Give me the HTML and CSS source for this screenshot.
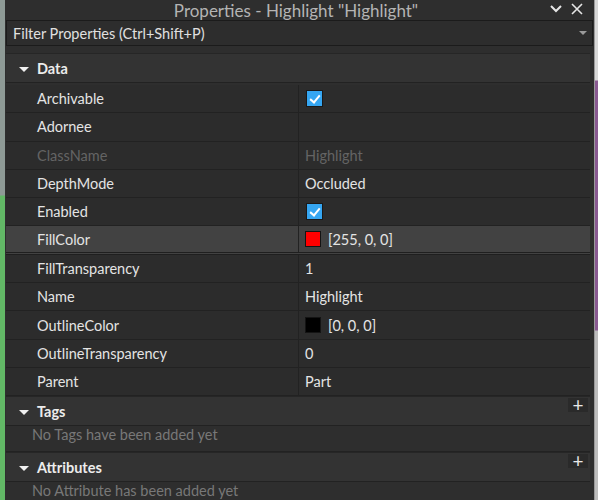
FILE: index.html
```html
<!DOCTYPE html>
<html lang="en">
<head>
    <meta charset="UTF-8">
    <title>Properties - Highlight "Highlight"</title>
    <link rel="stylesheet" href="styles.css">
</head>
<body>
    <div class="edge-left"></div>

    <div class="panel">
        <div class="title-bar">
            <span class="title">Properties - Highlight "Highlight"</span>
            <div class="title-icons">
                <svg width="14" height="10" viewBox="0 0 14 10"><path d="M2 2 L7 7 L12 2" fill="none" stroke="#e6e6e6" stroke-width="2"/></svg>
                <svg width="14" height="14" viewBox="0 0 14 14"><path d="M2 2 L12 12 M12 2 L2 12" fill="none" stroke="#e6e6e6" stroke-width="1.6"/></svg>
            </div>
        </div>

        <div class="filter">
            <span>Filter Properties (Ctrl+Shift+P)</span>
            <span class="filter-arrow"></span>
        </div>

        <div class="section">
            <div class="section-head"><span class="caret"></span>Data</div>
            <div class="rows">
                <div class="row"><div class="name">Archivable</div><div class="value"><span class="check"></span></div></div>
                <div class="row"><div class="name">Adornee</div><div class="value"></div></div>
                <div class="row disabled"><div class="name">ClassName</div><div class="value">Highlight</div></div>
                <div class="row"><div class="name">DepthMode</div><div class="value">Occluded</div></div>
                <div class="row"><div class="name">Enabled</div><div class="value"><span class="check"></span></div></div>
                <div class="row selected"><div class="name">FillColor</div><div class="value"><span class="swatch red"></span>[255, 0, 0]</div></div>
                <div class="row"><div class="name">FillTransparency</div><div class="value">1</div></div>
                <div class="row"><div class="name">Name</div><div class="value">Highlight</div></div>
                <div class="row"><div class="name">OutlineColor</div><div class="value"><span class="swatch black"></span>[0, 0, 0]</div></div>
                <div class="row"><div class="name">OutlineTransparency</div><div class="value">0</div></div>
                <div class="row"><div class="name">Parent</div><div class="value">Part</div></div>
            </div>
        </div>

        <div class="section">
            <div class="section-head"><span class="caret"></span>Tags<span class="add">+</span></div>
            <div class="empty">No Tags have been added yet</div>
        </div>

        <div class="section">
            <div class="section-head"><span class="caret"></span>Attributes<span class="add">+</span></div>
            <div class="empty">No Attribute has been added yet</div>
        </div>
    </div>

    <div class="edge-right"></div>
</body>
</html>
```

FILE: styles.css
```css
/* Painel de propriedades, tema escuro */

body {
    margin: 0;
    display: flex;
    height: 500px;
    overflow: hidden;
    font-family: 'Lato', 'Liberation Sans', sans-serif;
    font-size: 14.5px;
    color: #e4e4e4;
    background: #2e2e2e;
}

.edge-left {
    width: 5px;
    background: linear-gradient(#8e9a96 0, #8e9a96 195px, #62b866 196px);
}
.edge-right {
    width: 3px;
    border-left: 1px solid #9a9a9a;
    background: linear-gradient(#d8d8d8 0, #d8d8d8 80px, #8a5a92 81px, #8a5a92 330px, #bdbdbd 331px);
}

.panel {
    flex: 1;
    background: #2e2e2e;
    padding: 0 2px 0 1px;
    overflow: hidden;
}

/* --- barra de titulo --- */
.title-bar {
    height: 20px;
    position: relative;
    display: flex;
    justify-content: center;
    align-items: center;
}
.title { font-size: 17px; color: #b4b4b4; margin-right: 6px; }
.title-icons {
    position: absolute; right: 8px; top: 2px;
    display: flex; gap: 7px; align-items: center;
}

/* --- filtro --- */
.filter {
    height: 24px;
    border: 1px solid #1b1b1b;
    background: #2d2d2d;
    display: flex; align-items: center; justify-content: space-between;
    padding: 0 5px 0 6px;
    margin-right: -1px;
    color: #e0e0e0;
}
.filter-arrow {
    width: 0; height: 0;
    border-left: 4px solid transparent; border-right: 4px solid transparent;
    border-top: 4px solid #9a9a9a;
}

/* --- secoes --- */
.section { margin-right: 2px; }
.filter + .section { margin-top: 7px; }

.section-head {
    height: 30px;
    position: relative;
    display: flex; align-items: center;
    background: #333333;
    border-top: 1px solid #262626;
    border-bottom: 1px solid #222;
    font-weight: bold;
    color: #ececec;
    padding-left: 31px;
    box-sizing: border-box;
}
.caret {
    position: absolute; left: 13px; top: 13px;
    width: 0; height: 0;
    border-left: 5px solid transparent; border-right: 5px solid transparent;
    border-top: 5px solid #f0f0f0;
}
.add {
    position: absolute; right: 2px; top: 1px;
    width: 20px; height: 14px;
    background: #2a2a2a;
    color: #e8e8e8;
    font-weight: normal; font-size: 19px; line-height: 13px;
    text-align: center;
}

.rows { padding-top: 2px; }

.row {
    display: flex;
    height: 28.3px;
    border-bottom: 1px solid #222;
    box-sizing: border-box;
    background: #2c2c2c;
}
.row .name {
    width: 293px;
    padding-left: 31px;
    box-sizing: border-box;
    border-right: 1px solid #222;
    display: flex; align-items: center;
}
.row .value {
    flex: 1;
    padding-left: 6px;
    display: flex; align-items: center;
}
.row.disabled { color: #646464; }
.row.selected { background: #424242; border-bottom: 3px double #1f1f1f; }

.check {
    width: 15px; height: 15px;
    margin-left: 1px;
    border: 1px solid #1a1a1a;
    background: #35a6f2;
    position: relative;
}
.check::after {
    content: "";
    position: absolute; left: 5px; top: 2px;
    width: 4px; height: 8px;
    border: solid #fff; border-width: 0 2px 2px 0;
    transform: rotate(40deg);
}

.swatch {
    width: 14px; height: 14px;
    border: 1px solid #141414;
    margin-right: 7px;
}
.swatch.red { background: #ff0000; }
.swatch.black { background: #000; }

.empty {
    height: 26px;
    padding-left: 26px;
    color: #787878;
    line-height: 18px;
    border-bottom: 1px solid #222;
    box-sizing: border-box;
}
```
